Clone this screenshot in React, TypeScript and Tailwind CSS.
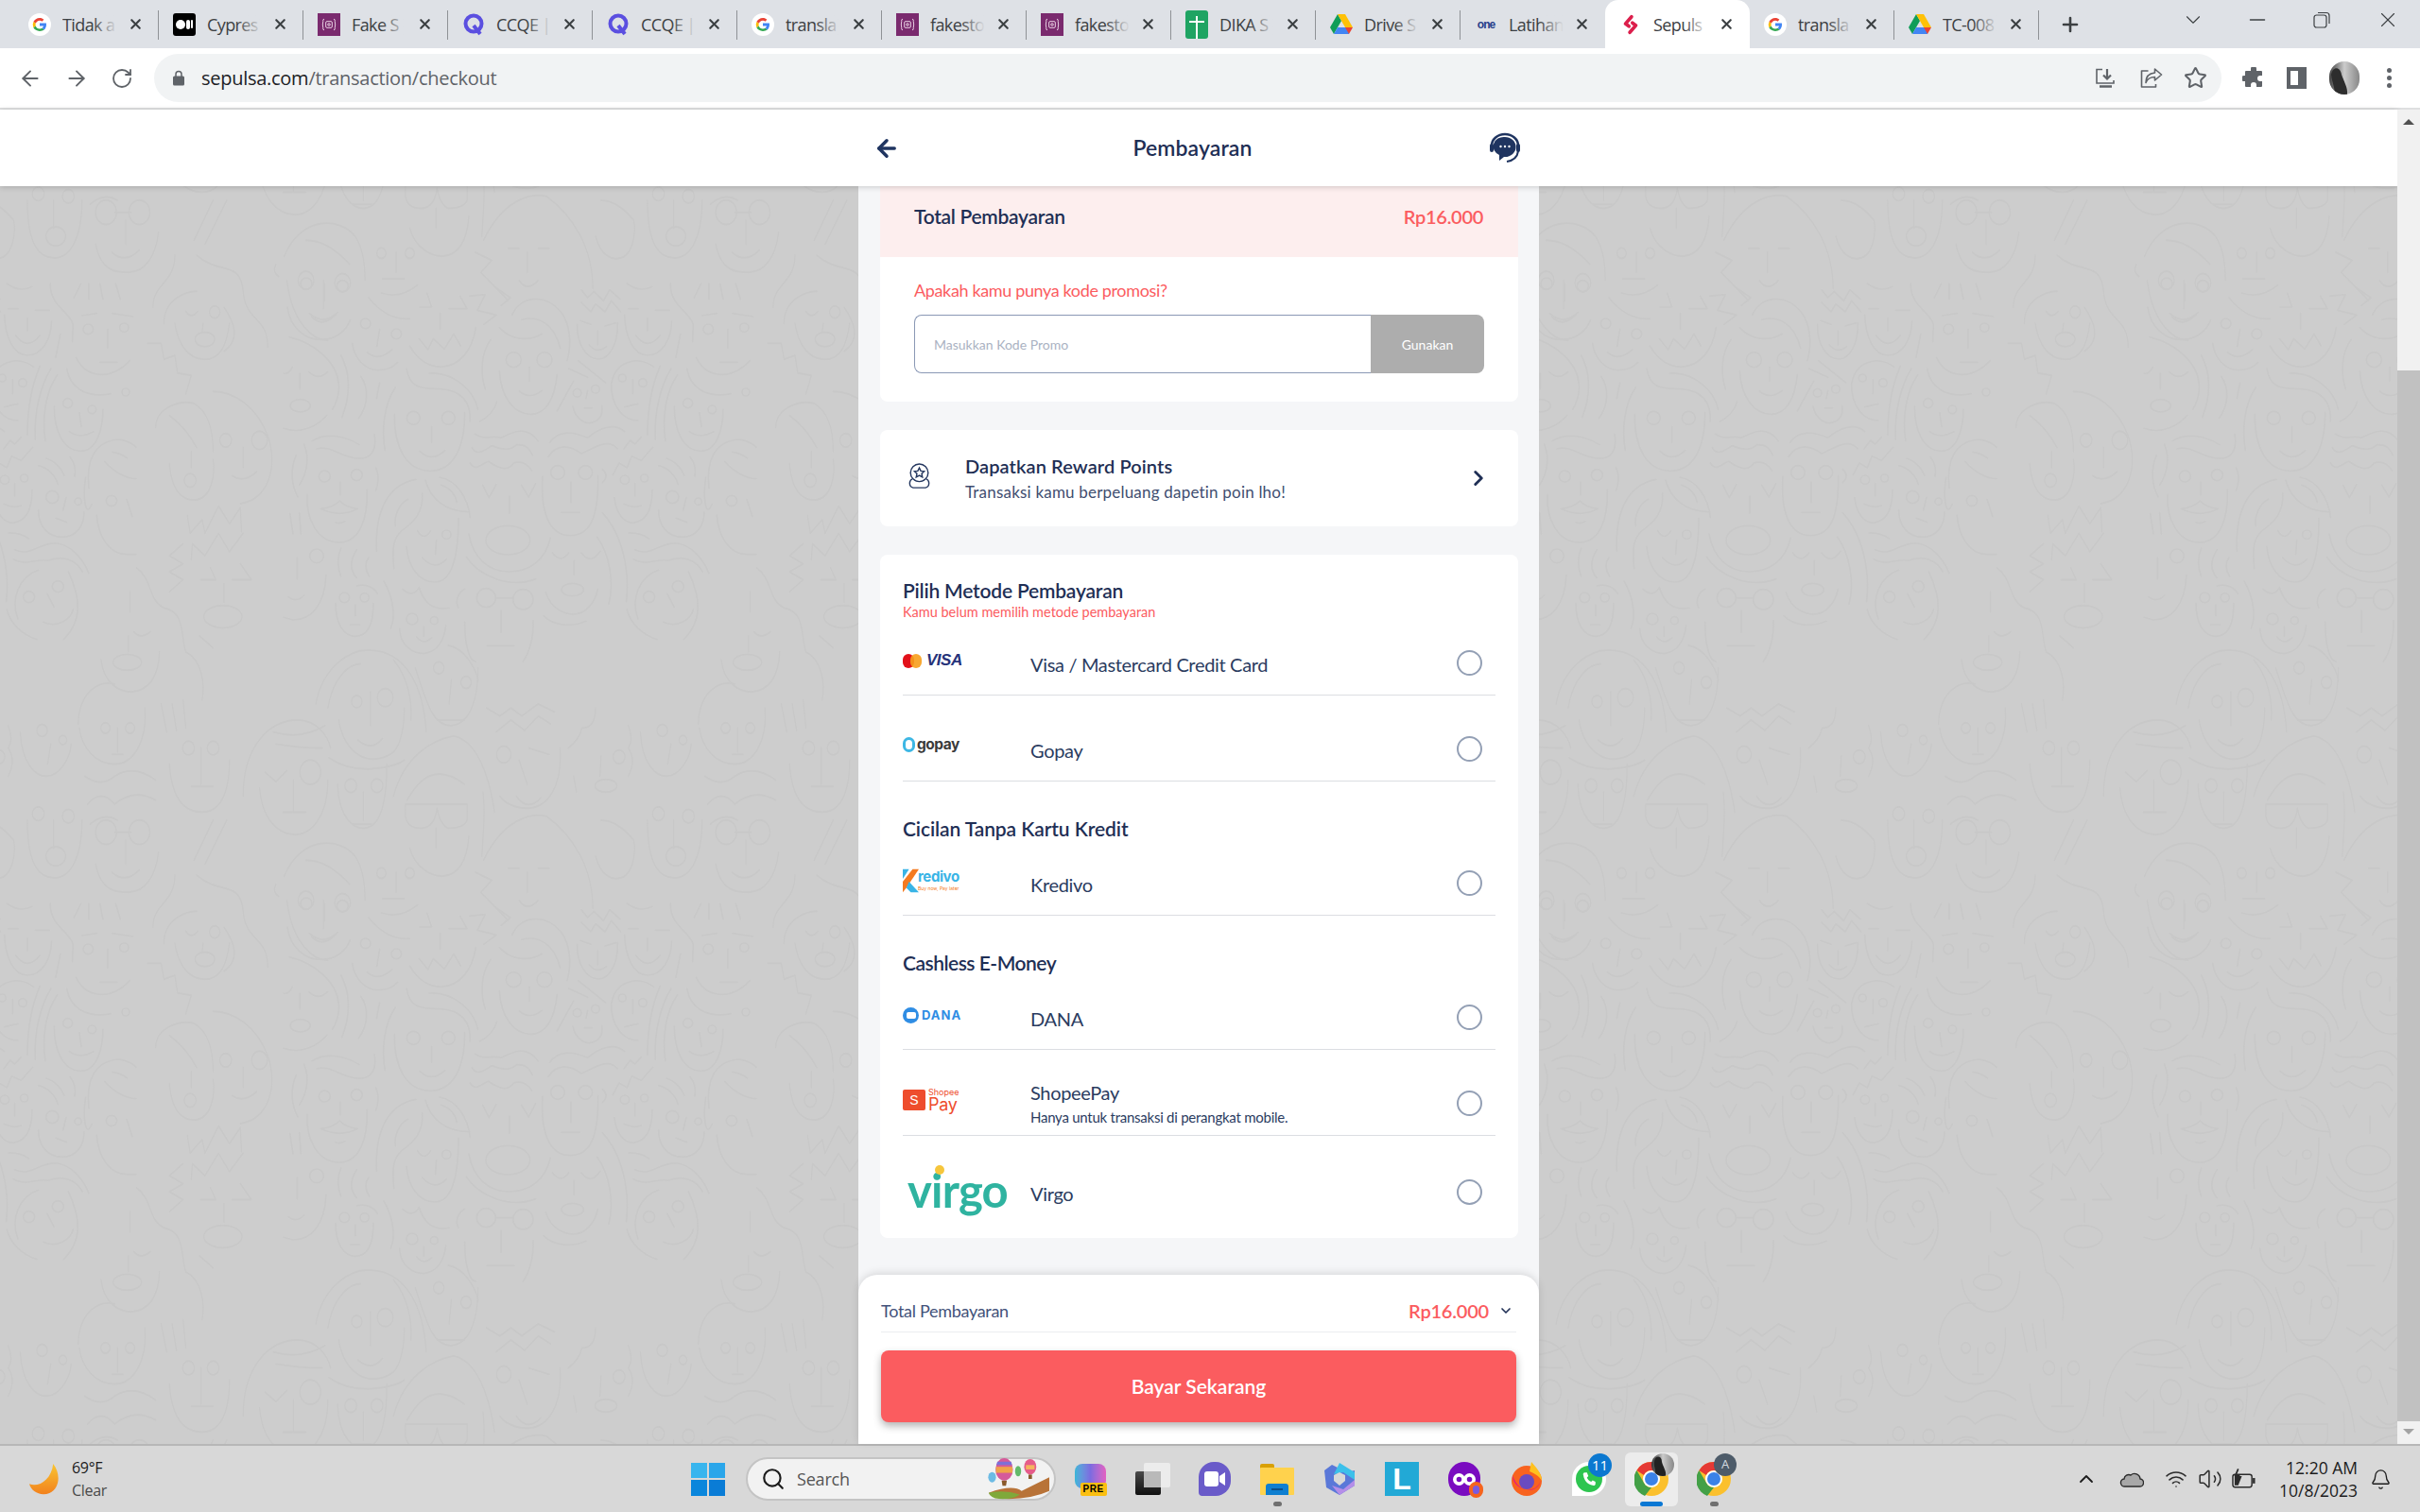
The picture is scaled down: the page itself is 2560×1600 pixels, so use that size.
import React from "react";
import { ArrowLeft, ArrowRight, RotateCw, Star, X, Plus, ChevronDown, ChevronRight, ChevronUp, Minus, Search, Bell, Volume2, Wifi } from "lucide-react";

const A_PATHS = [
  "M12 75 C20 140 70 180 120 178 C165 178 200 150 212 115","M82 95 Q125 135 172 92","M130 0 V55",
  "M218 190 C225 240 260 275 300 275 C330 275 350 265 362 250","M305 145 L296 200","M265 218 Q300 250 345 210","M270 45 C310 95 350 115 400 112","M310 30 Q370 50 425 5",
  "M400 198 C430 250 470 265 500 265 C560 262 600 210 610 140","M430 175 L458 210 L475 175 L510 208 L540 160 L562 198","M497 95 V145","M432 75 H470 L455 30","M525 80 H582 L560 40","M590 40 L640 35 L615 85 L675 100 L635 130","M670 10 L720 45 L690 70",
  "M780 265 V310","M748 342 Q782 370 820 340","M685 278 C690 360 730 415 785 415 C830 415 860 370 868 290","M725 100 C750 40 830 30 880 90 C910 130 915 190 900 245","M685 140 C720 180 780 185 820 160","M755 115 C810 100 860 130 878 205","M658 178 C625 220 625 290 640 335",
  "M18 170 C100 190 170 250 175 320 C178 350 165 385 155 400","M0 460 C60 480 110 450 138 418","M80 280 Q110 310 140 280","M0 285 Q15 290 28 265","M52 285 V335","M182 228 C210 280 215 350 185 425","M245 295 C270 330 270 385 238 428","M305 315 L295 365",
  "M470 455 V505","M432 532 Q470 570 512 530","M352 415 C350 520 390 595 465 595 C540 595 575 520 575 410","M390 270 C400 330 430 335 500 335 C560 340 595 370 592 438","M462 285 C540 280 605 340 617 400","M355 330 C320 380 310 460 322 530","M622 438 C650 425 670 400 677 375",
  "M607 478 C640 500 660 480 690 490 C730 470 770 450 808 500","M598 520 C610 550 640 530 660 515 C700 530 720 530 740 512 C770 510 780 525 790 545","M592 570 C610 600 630 570 650 565 C680 585 710 600 730 570 C760 560 780 580 788 595","M632 640 L652 680 L675 638","M755 640 L778 678 L800 635","M717 675 V730","M588 795 C600 870 650 915 715 915 C780 915 830 880 847 808","M580 868 C620 930 720 970 800 938",
  "M845 505 C870 465 920 470 965 490 C1000 460 1050 440 1082 470","M840 550 C870 505 910 515 945 540 C990 520 1030 490 1060 525","M912 630 V695","M882 727 H940","M822 612 C815 720 840 800 910 800 C970 800 1000 750 998 610","M1012 590 Q1035 610 1012 632",
  "M1080 525 L1100 498 L1115 510 L1135 488","M1045 608 L1065 570 L1090 585 L1105 548 L1135 562 L1172 520","M1115 635 V675","M1080 700 Q1110 715 1135 705","M1050 680 C1055 730 1080 760 1110 760 C1150 755 1170 720 1170 655",
  "M1190 578 C1220 585 1245 610 1252 638","M1215 555 C1245 565 1265 590 1272 610","M1290 550 C1305 570 1310 590 1305 612","M1278 680 L1268 720","M1245 745 L1280 758","M1190 720 C1190 770 1220 805 1265 805 C1310 805 1335 770 1335 725",
  "M932 130 C930 190 960 240 1000 240 C1035 240 1062 190 1060 125","M942 118 L975 130","M1020 135 L1055 125","M997 150 V195","M970 195 Q995 225 1025 200","M945 20 L965 45 L985 25 L1015 55 L1035 20 L1068 50","M945 60 L975 90 L990 65 L1020 90 L1040 55 L1070 90",
  "M1082 100 C1085 170 1110 228 1155 228 C1200 228 1230 180 1232 120","M1095 80 H1125","M1180 85 H1225","M1155 110 V150","M1118 165 Q1155 215 1195 165","M1090 0 Q1130 30 1170 10",
  "M1108 305 V350","M1082 392 L1125 382","M1175 265 C1120 225 1050 250 1040 320 C1040 380 1070 435 1125 435","M1195 262 C1170 320 1155 400 1155 480","M1230 270 C1200 320 1175 400 1180 495","M1250 290 C1215 340 1200 420 1212 500","M905 270 L965 298","M935 245 L1022 315","M920 310 L868 405","M965 340 L960 365","M955 395 H980","M918 390 C925 425 950 443 970 443 C1000 440 1015 420 1010 388",
  "M1320 410 L1326 455","M1288 470 Q1320 495 1365 470","M1240 390 C1240 470 1270 532 1325 532 C1375 532 1395 460 1395 400","M1280 270 C1290 330 1340 365 1420 350","M1310 235 C1340 300 1420 310 1480 245","M1410 145 V205","M1385 250 H1440","M1328 102 L1375 95","M1425 95 L1490 105","M1228 0 C1225 70 1290 90 1300 130 L1298 185","M1260 160 L1245 235","M1303 45 L1325 0","M1350 50 V0","M1395 50 L1385 0","M1450 50 L1435 0",
  "M90 500 C130 475 190 480 240 512","M105 525 C150 510 190 560 250 555 C285 550 295 520 288 478","M180 630 V672","M118 715 Q160 710 178 690 Q195 710 235 715 Q180 745 118 715","M165 758 Q180 765 195 755","M75 670 C70 750 110 822 175 822 C240 822 268 750 265 655","M65 510 C85 560 70 610 50 640","M40 545 C20 590 25 640 45 678","M292 585 C305 610 300 640 292 658",
  "M295 850 C290 740 320 640 420 622","M450 625 C465 680 510 725 590 725","M495 615 C550 625 585 680 592 742","M500 640 C530 650 545 670 550 695","M395 685 C365 700 350 740 355 770","M440 665 C445 730 410 760 375 785 C345 810 345 850 350 905","M425 785 Q445 820 467 785","M485 815 L482 860","M440 870 Q480 915 517 875","M390 835 C395 900 430 948 480 948 C525 948 555 890 555 745",
  "M853 855 Q880 890 905 855","M945 855 Q975 895 1005 850","M922 880 V925","M832 980 C850 1040 900 1050 920 1050 C960 1050 990 1010 997 970","M995 805 C1035 860 1050 950 1032 1018","M1012 728 C1070 790 1100 900 1088 1010","M825 1055 C860 1090 920 1090 960 1072",
  "M673 998 H728","M690 1038 V1108","M645 1150 H732","M575 1075 C575 1150 590 1200 610 1200","M792 1070 C795 1130 775 1180 760 1200","M575 970 C550 985 545 1010 555 1030",
  "M1115 845 C1170 870 1190 820 1250 825 C1290 830 1330 870 1350 920","M1110 875 C1150 900 1190 870 1220 880 C1270 860 1310 880 1330 915","M1095 792 Q1130 790 1160 810","M1218 985 L1240 1028","M1205 1075 C1250 1095 1295 1065 1300 1035","M1190 910 C1130 930 1100 1000 1125 1065","M1285 915 C1325 1000 1330 1070 1270 1130","M1090 1035 C1100 1080 1140 1115 1185 1130",
  "M228 1020 V1055","M212 1083 H242","M165 1015 C165 1080 190 1120 228 1120 C270 1120 285 1080 285 1015","M232 960 C265 950 290 970 298 985","M182 840 C170 870 170 900 182 930","M232 845 C210 880 210 910 232 935","M270 870 C255 890 260 910 272 930","M318 945 C350 1000 355 1060 340 1095",
  "M445 1090 V1120","M422 1122 Q445 1150 470 1125","M368 1095 C370 1150 410 1175 445 1175 C490 1170 510 1130 515 1085","M378 970 Q410 1000 430 965 C445 1010 470 1040 525 1030",
  "M43 870 V938","M15 995 Q40 1015 65 990","M135 925 C130 1020 90 1068 30 1068 L0 1060","M20 730 L30 795","M50 728 L55 795",
  "M1340 615 C1330 680 1340 750 1360 700","M1350 650 C1340 560 1370 500 1445 495 C1480 498 1500 520 1500 520","M1400 565 C1430 600 1470 620 1500 620","M1425 535 Q1455 540 1472 555","M1470 685 L1488 740","M1375 735 C1380 810 1420 860 1470 860 L1500 860",
];
const A_CIRCLES = [[72,0,18],[187,8,18],[260,127,16],[358,160,16],[730,242,24],[828,242,24],[412,427,21],[523,427,21],[870,600,22],[958,600,22],[1083,623,14],[1145,618,12],[1234,678,20],[1316,692,11],[1075,300,12],[1140,315,13],[932,347,13],[990,335,13],[1283,380,15],[1360,400,13],[1348,145,16],[1462,140,14],[130,612,18],[232,608,18],[517,797,14],[643,998,30],[760,1003,32],[1160,995,18],[1252,962,18],[193,997,16],[257,997,14],[408,1065,18],[478,1070,12],[105,865,22],[1422,690,17],[1467,345,12]];
const A_ELLIPSES = [[53,388,32,20],[712,815,70,46],[917,972,35,20]];

const B_PATHS = [
  "M578 645 C590 600 640 575 680 578 C740 580 775 620 780 680","M600 650 C610 610 640 595 660 595","M720 590 C745 610 755 640 752 665","M678 630 V672","M655 690 Q680 705 700 688","M620 665 C630 710 680 725 720 705 C735 695 740 670 740 650",
  "M826 615 L822 645","M800 665 H850","M760 600 C780 640 790 672 825 672 C860 670 875 640 875 600","M820 572 C850 575 870 600 875 615",
  "M445 760 C445 700 490 665 545 665 C580 665 600 685 605 700","M500 680 Q550 690 595 672","M505 695 Q550 700 590 700","M485 730 L505 742 L525 728","M537 740 V780","M518 780 H560","M475 750 C480 790 510 808 540 808 C570 808 600 785 600 740",
  "M665 755 V790","M645 795 H680","M618 745 C620 790 650 800 665 800 C695 800 708 770 708 720","M602 712 C650 735 720 725 740 715",
  "M720 760 C740 710 790 690 830 685 C870 690 895 730 905 780","M745 765 C770 735 800 720 850 745","M742 770 H855 V790 Q850 800 820 800 Q805 795 800 775 Q795 800 770 800 Q745 800 742 785 Z","M798 800 V825","M750 825 C760 850 790 860 810 860 C840 858 855 840 858 810","M882 835 C885 800 888 780 884 755",
  "M968 700 L1005 708","M950 715 L965 745","M945 760 Q965 780 990 762","M1025 700 C1030 750 1000 775 965 775 C945 775 925 770 915 760","M890 650 L915 660 L935 650 L955 660 L985 645 L1015 655","M908 680 L935 665 L960 678 L985 660 L1008 670",
  "M1040 700 Q1060 690 1065 675 Q1090 675 1090 650","M1150 672 Q1160 690 1150 700 Q1165 715 1150 735","M1100 710 L1098 735","M1050 735 L1055 755",
  "M1228 695 L1222 720","M1172 680 C1175 720 1200 735 1220 735 C1245 735 1265 710 1265 695",
  "M1278 670 C1280 630 1315 615 1345 620","M1400 650 C1405 690 1380 720 1345 720 C1310 720 1285 700 1280 675","M1350 675 V705","M1340 708 H1360",
  "M1430 645 L1440 680","M1450 645 L1458 678","M1470 640 L1475 675","M1503 700 V745","M1485 748 H1525","M1445 720 C1450 770 1480 780 1505 780 C1535 780 1555 760 1555 715",
  "M1290 735 Q1320 750 1345 735 Q1380 720 1420 740","M1295 770 Q1320 750 1345 770 Q1380 750 1420 765","M1300 795 Q1325 780 1350 790",
  "M1233 790 V825","M1185 790 C1185 850 1210 862 1235 862 C1265 862 1285 835 1285 790",
  "M1345 805 H1375","M1365 815 V845","M1340 855 Q1365 870 1390 852","M1310 845 C1320 880 1350 880 1370 880 C1400 880 1420 860 1425 830",
  "M1090 835 C1100 860 1120 865 1135 862 C1155 860 1165 835 1160 815","M1100 790 Q1130 790 1160 815",
  "M505 870 Q498 880 510 885","M592 890 V925","M570 935 Q590 950 615 932","M525 890 C535 945 575 965 600 965","M520 860 C550 810 620 810 650 835 C665 850 668 870 668 890","M560 840 Q600 840 640 870",
  "M725 855 V880","M700 888 H740",
  "M885 840 C920 790 970 780 1000 785 C1050 810 1085 850 1085 900","M930 850 H950","M985 850 H1005","M965 855 V880","M950 890 Q965 905 985 890","M870 855 L900 865 L880 880 L930 915",
  "M1490 840 L1525 790","M1510 845 L1550 790",
  "M300 170 C300 140 340 130 360 130","M410 150 C430 170 440 190 410 205","M340 155 Q350 165 362 155","M372 170 L370 180","M320 170 C330 210 360 215 375 215 C405 215 415 195 420 170","M360 85 C400 110 440 90 445 130 C450 170 490 160 490 200","M280 150 C280 120 320 120 320 85",
  "M270 195 H295 L300 215 L320 210 L325 232 L350 235 L340 258",
  "M285 300 C285 275 330 265 355 270 C380 280 390 300 390 330","M310 285 Q340 300 360 325","M350 330 V350","M310 345 C315 385 340 392 360 390 C385 388 395 360 390 340",
  "M445 325 V350","M425 360 Q445 370 470 355","M390 255 C430 255 470 275 490 310 C510 350 490 390 440 395",
  "M343 410 L348 432 L370 415 L375 432 L400 398 L420 420 L440 400 L442 430","M350 465 L352 445 L375 460 L400 432 L420 455 L445 432","M335 445 L310 460 L335 470 L310 480 L335 490 L310 505","M367 490 H395 L385 475","M425 490 H460 L440 470","M410 495 V518","M365 560 L390 575",
  "M250 475 C280 490 270 515 300 525 C340 530 330 560 340 580 C370 590 375 620 370 640","M245 555 Q258 565 275 555","M238 505 V530","M235 560 V580","M185 590 C190 620 220 630 240 630 C275 628 290 610 292 580",
];
const B_CIRCLES = [[653,642,8],[705,637,12],[803,600,8],[853,618,8],[568,730,16],[642,747,9],[690,747,9],[922,708,11],[1133,711,9],[1212,678,8],[1250,690,6],[1328,675,7],[1373,675,7],[1480,700,9],[1525,700,9],[1205,782,9],[1260,785,9],[1329,805,16],[1390,805,16],[560,890,12],[627,893,12],[698,856,7],[750,856,7],[393,156,8],[348,366,9],[413,316,9],[475,316,12]];
const B_ELLIPSES = [[1109,747,20,8],[1237,835,18,12],[375,190,18,9],[408,536,35,14],[233,593,26,10]];

function Doodle() {
  return (
    <svg className="absolute inset-0 w-full h-full" aria-hidden="true">
      <defs>
        <g id="tileart" fill="none" stroke="#c8c8c8" strokeLinecap="round" strokeLinejoin="round">
          <g transform="translate(300 103) scale(0.3333)" strokeWidth="5">
            {A_PATHS.map((d, i) => <path key={i} d={d} />)}
            {A_CIRCLES.map(([x, y, r], i) => <circle key={i} cx={x} cy={y} r={r} />)}
            {A_ELLIPSES.map(([x, y, a, b], i) => <ellipse key={i} cx={x} cy={y} rx={a} ry={b} />)}
          </g>
          <g transform="translate(0 1) scale(0.578 0.848)" strokeWidth="2.3">
            {B_PATHS.map((d, i) => <path key={i} d={d} />)}
            {B_CIRCLES.map(([x, y, r], i) => <ellipse key={i} cx={x} cy={y} rx={r * 1.2} ry={r * 0.95} />)}
            {B_ELLIPSES.map(([x, y, a, b], i) => <ellipse key={i} cx={x} cy={y} rx={a} ry={b} />)}
          </g>
        </g>
        <pattern id="faces" patternUnits="userSpaceOnUse" width="656" height="656">
          <use href="#tileart" />
          <use href="#tileart" x="-656" />
          <use href="#tileart" y="-656" />
          <use href="#tileart" x="-656" y="-656" />
        </pattern>
      </defs>
      <rect width="100%" height="100%" fill="url(#faces)" />
    </svg>
  );
}

const GoogleG = () => (
  <svg viewBox="0 0 48 48" className="w-[24px] h-[24px]">
    <circle cx="24" cy="24" r="24" fill="#fff" />
    <path fill="#EA4335" d="M24 10c3.5 0 6.4 1.2 8.8 3.4l-4 4c-1.3-1.2-3-2-4.8-2-4 0-7.300 2.700-8.500 6.300l-4.700-3.600C13 13.500 18 10 24 10z" />
    <path fill="#FBBC05" d="M15.500 21.700a8.700 8.700 0 0 0 0 5.400l-4.700 3.600a15 15 0 0 1 0-12.600z" />
    <path fill="#34A853" d="M24 38c-5.900 0-11-3.400-13.200-7.300l4.700-3.600c1.200 3.500 4.500 6 8.500 6 2 0 3.800-.5 5.200-1.500l4.500 3.500C31 36.800 27.700 38 24 38z" />
    <path fill="#4285F4" d="M38 24c0-1-.1-2-.3-3H24v5.800h8c-.4 2-1.500 3.500-3 4.600l4.500 3.500C36.300 32.400 38 28.600 38 24z" />
  </svg>
);
const Medium = () => (
  <div className="w-[24px] h-[24px] rounded-[3px] bg-black flex items-center justify-center gap-[1px]">
    <span className="w-[10px] h-[10px] rounded-full bg-white" />
    <span className="w-[4px] h-[10px] rounded-full bg-white" />
    <span className="w-[2px] h-[9px] rounded-full bg-white" />
  </div>
);
const FakeStore = () => (
  <div className="w-[24px] h-[24px] bg-[#7a2a6e] flex items-center justify-center">
    <svg viewBox="0 0 24 24" className="w-[20px] h-[20px]" fill="none" stroke="#e8cfe3" strokeWidth="1.2">
      <path d="M6 5 Q4 5 4.500 8 L4 12 L4.500 16 Q4 19 6 19 M18 5 Q20 5 19.500 8 L20 12 L19.500 16 Q20 19 18 19" />
      <rect x="8" y="8" width="8" height="8" rx="1.500" />
      <circle cx="12" cy="12" r="1.500" />
    </svg>
  </div>
);
const QIcon = () => (
  <svg viewBox="0 0 24 24" className="w-[24px] h-[24px]" fill="none">
    <circle cx="12" cy="11" r="8.500" stroke="#5b4fe0" strokeWidth="4" />
    <path d="M12 13 L19 22" stroke="#5b4fe0" strokeWidth="4" />
  </svg>
);
const Sheets = () => (
  <div className="w-[24px] h-[30px] rounded-[3px] bg-[#1fa463] relative">
    <span className="absolute left-[11px] top-[6px] w-[2px] h-[24px] bg-white" />
    <span className="absolute left-[4px] top-[11px] w-[16px] h-[2px] bg-white" />
  </div>
);
const Drive = () => (
  <svg viewBox="0 0 24 22" className="w-[24px] h-[22px]">
    <path fill="#0F9D58" d="M8 0 L0 14 L4 21 L12 7 Z" />
    <path fill="#FFC107" d="M8 0 H16 L24 14 H16 Z" />
    <path fill="#4285F4" d="M4 21 L8 14 H20 L20 21 Z" />
    <path fill="#EA4335" d="M20 21 H20 L24 14 H16 Z" />
  </svg>
);
const OneIcon = () => (
  <div className="w-[24px] h-[24px] flex items-center justify-center text-[12px] font-bold text-[#27408b] tracking-[-1px] font-['Liberation_Sans']">
    one
  </div>
);
const Sepulsa = () => (
  <svg viewBox="0 0 24 24" className="w-[22px] h-[26px]" fill="none" stroke="#dc1f4c" strokeWidth="4" strokeLinecap="round" strokeLinejoin="round">
    <path d="M13 3 L6 11 L10 14" />
    <path d="M11 21 L18 13 L14 10" />
  </svg>
);

const TABS: { title: string; icon: React.ReactNode; active?: boolean; hideSep?: boolean }[] = [
  { title: "Tidak a", icon: <GoogleG /> },
  { title: "Cypres", icon: <Medium /> },
  { title: "Fake S", icon: <FakeStore /> },
  { title: "CCQE |", icon: <QIcon /> },
  { title: "CCQE |", icon: <QIcon /> },
  { title: "transla", icon: <GoogleG /> },
  { title: "fakesto", icon: <FakeStore /> },
  { title: "fakesto", icon: <FakeStore /> },
  { title: "DIKA S", icon: <Sheets /> },
  { title: "Drive S", icon: <Drive /> },
  { title: "Latihan", icon: <OneIcon />, hideSep: true },
  { title: "Sepuls", icon: <Sepulsa />, active: true, hideSep: true },
  { title: "transla", icon: <GoogleG /> },
  { title: "TC-008", icon: <Drive /> },
];

function TabStrip() {
  return (
    <div className="h-[51px] bg-[#dee1e6] flex items-stretch pl-[15px] shrink-0 font-['Open_Sans']">
      {TABS.map((t, i) => (
        <div key={i} className={t.active ? "relative w-[153px] bg-white rounded-t-[14px] flex items-center" : "relative w-[153px] flex items-center"}>
          <div className="w-[24px] ml-[15px] shrink-0 flex justify-center">{t.icon}</div>
          <div className="relative ml-[12px] w-[58px] overflow-hidden whitespace-nowrap text-[18px] leading-[24px] text-[#3c4043] tracking-[-0.6px]">
            {t.title}
            <span className={t.active ? "absolute right-0 top-0 bottom-0 w-[26px] bg-linear-to-r from-transparent to-white" : "absolute right-0 top-0 bottom-0 w-[26px] bg-linear-to-r from-transparent to-[#dee1e6]"} />
          </div>
          <X className="absolute left-[120px] w-[17px] h-[17px] text-[#3c4043]" strokeWidth={3} />
          {!t.hideSep && <span className="absolute right-0 top-[11px] h-[31px] w-[1px] bg-[#8f9296]" />}
        </div>
      ))}
      <div className="w-[66px] flex items-center justify-center">
        <Plus className="w-[24px] h-[24px] text-[#3c4043]" strokeWidth={2.600} />
      </div>
      <div className="flex-1" />
      <div className="flex items-start pt-[8px] text-[#3c4043]">
        <ChevronDown className="w-[26px] h-[26px] mr-[42px]" strokeWidth={1} />
        <Minus className="w-[26px] h-[26px] mr-[45px]" strokeWidth={1.200} />
        <svg viewBox="0 0 20 20" className="w-[20px] h-[24px] mr-[47px] mt-[1px]" fill="none" stroke="#3c4043" strokeWidth="1.200">
          <rect x="2" y="5" width="13" height="13" rx="2.500" />
          <path d="M6 2.500 H15 Q18 2.500 18 5.500 V14" />
        </svg>
        <X className="w-[26px] h-[26px] mr-[21px]" strokeWidth={1} />
      </div>
    </div>
  );
}

function Toolbar() {
  return (
    <div className="h-[65px] bg-white border-b-[2px] border-[#dedfe0] flex items-start shrink-0 pt-[6px] box-border">
      <div className="w-[163px] h-[51px] flex items-center text-[#5f6368] pl-[19px] shrink-0">
        <ArrowLeft className="w-[26px] h-[26px]" strokeWidth={1.800} />
        <ArrowRight className="w-[26px] h-[26px] ml-[23px]" strokeWidth={1.800} />
        <RotateCw className="w-[24px] h-[24px] ml-[23px]" strokeWidth={1.800} />
      </div>
      <div className="w-[2187px] h-[51px] bg-[#f1f3f4] rounded-full flex items-center shrink-0 pl-[20px] pr-[15px]">
        <svg viewBox="0 0 12 16" className="w-[12px] h-[17px] shrink-0" fill="#5f6368">
          <rect x="0" y="6" width="12" height="10" rx="1.500" />
          <path d="M3 7 V4 a3 3 0 0 1 6 0 V7" fill="none" stroke="#5f6368" strokeWidth="1.500" />
        </svg>
        <span className="ml-[18px] text-[20px] tracking-[-0.27px] text-[#202124] font-['Open_Sans'] whitespace-nowrap">
          sepulsa.com<span className="text-[#5f6368]">/transaction/checkout</span>
        </span>
        <div className="flex-1" />
        <svg viewBox="0 0 24 24" className="w-[24px] h-[24px] text-[#5f6368]" fill="none" stroke="currentColor" strokeWidth="1.600">
          <path d="M9 2.500 H3 V17 H21 V14" />
          <path d="M14 2 V12 M10 8.500 L14 12.500 L18 8.500" strokeWidth="2.200" />
          <path d="M6 20.500 H19" strokeWidth="2.500" />
        </svg>
        <svg viewBox="0 0 24 24" className="w-[25px] h-[24px] ml-[24px] text-[#5f6368]" fill="none" stroke="currentColor" strokeWidth="1.600" strokeLinejoin="round">
          <path d="M9 4 H2 V21 H17 V18" />
          <path d="M16 2 L23 8 L16 14 V10.500 C11 10.500 8 12.500 6.500 16.500 C6.500 10.500 10 6.500 16 6 Z" />
        </svg>
        <Star className="w-[25px] h-[25px] ml-[22px] text-[#5f6368]" strokeWidth={2} />
      </div>
      <div className="h-[51px] flex items-center shrink-0 pl-[22px]">
        <svg viewBox="0 0 24 24" className="w-[24px] h-[24px]" fill="#5f6368">
          <path d="M9 2 a3 3 0 0 1 6 0 v2 h5 a1 1 0 0 1 1 1 v4 h-2 a3 3 0 0 0 0 6 h2 v5 a1 1 0 0 1-1 1 h-5 v-2 a3 3 0 0 0-6 0 v2 H4 a1 1 0 0 1-1-1 v-5 h-1 a3 3 0 0 1 0-6 h1 V5 a1 1 0 0 1 1-1 h5 z" />
        </svg>
        <div className="w-[21px] h-[23px] ml-[23px] border-[4px] border-r-[9px] border-[#5f6368] bg-white box-border" />
        <div className="relative w-[32px] h-[35px] ml-[24px] rounded-full overflow-hidden bg-linear-to-r from-[#444] via-[#ccc] to-[#888]">
          <svg viewBox="0 0 32 35" className="absolute inset-0 w-full h-full" fill="#2d2d2d">
            <path d="M2 14 C4 4 12 6 13 14 C15 20 20 28 19 35 H6 C6 28 3 22 2 14 Z" />
          </svg>
        </div>
        <div className="ml-[29px] flex flex-col gap-[3px]">
          <span className="w-[5px] h-[5px] rounded-full bg-[#5f6368]" />
          <span className="w-[5px] h-[5px] rounded-full bg-[#5f6368]" />
          <span className="w-[5px] h-[5px] rounded-full bg-[#5f6368]" />
        </div>
      </div>
    </div>
  );
}

const VisaLogo = () => (
  <div className="flex items-center h-[20px]">
    <span className="w-[12px] h-[15px] rounded-full bg-[#e2111a]" />
    <span className="w-[12px] h-[15px] rounded-full bg-[#f79e1b] -ml-[4px] opacity-90" />
    <span className="ml-[5px] text-[17px] leading-[20px] italic font-bold text-[#26337a] font-['Liberation_Sans'] tracking-[-0.5px]">VISA</span>
  </div>
);
const GopayLogo = () => (
  <div className="flex items-center h-[20px]">
    <span className="w-[13px] h-[16px] rounded-full border-[3px] border-[#3db7e4] box-border" />
    <span className="ml-[2px] text-[15.500px] leading-[20px] font-bold text-[#3a3a3a] font-['Inter'] tracking-[-0.5px]">gopay</span>
  </div>
);
const KredivoLogo = () => (
  <div className="relative flex items-start h-[26px] w-[60px]">
    <svg viewBox="0 0 18 26" className="w-[17px] h-[26px] shrink-0">
      <path d="M0 0 H7 L0 11 Z" fill="#38b4e6" />
      <path d="M18 0 H11 L0 14 V26 L4 21 Z" fill="#f47a20" />
      <path d="M7 14 L18 26 H9 L4 21 Z" fill="#38b4e6" />
    </svg>
    <div className="-ml-[1px] flex flex-col">
      <span className="text-[15px] leading-[18px] font-bold text-[#38b4e6] font-['Inter'] tracking-[-0.4px]">redivo</span>
      <span className="text-[5px] leading-[6px] text-[#f47a20] whitespace-nowrap font-['Inter']">Buy now, Pay later</span>
    </div>
  </div>
);
const DanaLogo = () => (
  <div className="flex items-center h-[20px]">
    <span className="relative w-[17px] h-[17px] rounded-full bg-[#2f8de4] flex items-center justify-center">
      <span className="w-[10px] h-[7px] rounded-[2px] bg-white" />
    </span>
    <span className="ml-[3px] text-[13px] leading-[20px] font-bold text-[#2f8de4] font-['Inter'] tracking-[1px]">DANA</span>
  </div>
);
const ShopeeLogo = () => (
  <div className="flex items-center h-[26px]">
    <span className="w-[24px] h-[22px] rounded-[2px] bg-[#ee4d2d] flex items-center justify-center text-white text-[14px] leading-none font-['Liberation_Sans']">S</span>
    <div className="ml-[3px] flex flex-col items-start text-[#ee4d2d] font-['Inter']">
      <span className="text-[9px] leading-[9px] whitespace-nowrap">Shopee</span>
      <span className="text-[18px] leading-[17px] whitespace-nowrap tracking-[-0.3px]">Pay</span>
    </div>
  </div>
);
const VirgoLogo = () => (
  <div className="relative ml-[5px] h-[52px] w-[105px] flex items-end">
    <span className="absolute left-[29px] top-0 w-[10px] h-[10px] rounded-full bg-[#f6c63c]" />
    <span className="text-[49px] leading-[52px] font-bold text-[#2fb3a0] font-['Lato'] tracking-[-0.8px] -mt-[8px]">virgo</span>
  </div>
);

const Radio = ({ extra }: { extra?: string }) => (
  <span className={"ml-auto mr-[14px] w-[27px] h-[27px] rounded-full border-[2px] border-[#94a0b5] box-border shrink-0 " + (extra ?? "")} />
);

function Row(props: { logo: React.ReactNode; label: string; sub?: string; h: string; pb: string; logoExtra: string; radioExtra?: string; noBorder?: boolean }) {
  const { logo, label, sub, h, pb, logoExtra, radioExtra, noBorder } = props;
  return (
    <div className={"flex items-end box-border " + h + " " + pb + (noBorder ? "" : " border-b border-[#dcdee2]")}>
      <div className={"w-[135px] shrink-0 " + logoExtra}>{logo}</div>
      <div className="flex flex-col">
        <span className="text-[20px] leading-[24px] text-[#2b3c5f] tracking-[-0.33px]">{label}</span>
        {sub && <span className="text-[15px] leading-[18px] mt-[5px] text-[#2b3c5f] tracking-[-0.25px]">{sub}</span>}
      </div>
      <Radio extra={radioExtra} />
    </div>
  );
}

function Checkout() {
  return (
    <div className="relative w-[720px] mx-auto bg-[#f5f6f8] flex flex-col h-full">
      <div className="ml-[23px] mr-[22px] bg-white rounded-b-[8px] h-[228px] shrink-0 flex flex-col">
        <div className="h-[75px] bg-[#fdeeee] flex items-center justify-between pl-[36px] pr-[37px] pb-[12px]">
          <span className="text-[21px] font-semibold text-[#1f2f55] tracking-[-0.3px]">Total Pembayaran</span>
          <span className="text-[20px] font-semibold text-[#fb5c5f] tracking-[-0.3px]">Rp16.000</span>
        </div>
        <div className="pl-[36px] pr-[36px] pt-[23px]">
          <div className="text-[18px] leading-[24px] text-[#fb5c5f] tracking-[-0.36px]">Apakah kamu punya kode promosi?</div>
          <div className="flex mt-[14px] h-[62px]">
            <div className="flex-1 border border-[#8a98b5] border-r-0 rounded-l-[8px] flex items-center pl-[20px] text-[14px] text-[#aab2c2]">Masukkan Kode Promo</div>
            <div className="w-[120px] bg-[#adadad] rounded-r-[8px] flex items-center justify-center text-[14px] text-white">Gunakan</div>
          </div>
        </div>
      </div>

      <div className="ml-[23px] mr-[22px] mt-[30px] bg-white rounded-[8px] h-[102px] shrink-0 flex items-center pl-[29px] pr-[29px]">
        <svg viewBox="0 0 26 30" className="w-[25px] h-[28px] shrink-0 -mt-[4px]" fill="none" stroke="#24375f" strokeWidth="1.500">
          <circle cx="13" cy="11" r="10" />
          <path d="M13 5.500 L14.700 9 L18.500 9.500 L15.700 12 L16.500 16 L13 14 L9.500 16 L10.300 12 L7.500 9.500 L11.300 9 Z" />
          <path d="M5 18 C1 20 1 27 6 28 H20 C25 27 25 20 21 18" />
        </svg>
        <div className="ml-[36px] flex flex-col">
          <span className="text-[20px] leading-[26px] font-semibold text-[#1f2f55] tracking-[0.1px]">Dapatkan Reward Points</span>
          <span className="text-[17px] leading-[24px] mt-[3px] text-[#3f4e70] tracking-[0.2px]">Transaksi kamu berpeluang dapetin poin lho!</span>
        </div>
        <ChevronRight className="ml-auto w-[26px] h-[26px] text-[#1f2f55]" strokeWidth={2.600} />
      </div>

      <div className="ml-[23px] mr-[22px] mt-[30px] bg-white rounded-[8px] shrink-0 pl-[24px] pr-[24px] pt-[26px] h-[723px] box-border flex flex-col">
        <div className="text-[21px] leading-[24px] font-semibold text-[#1f2f55] tracking-[-0.2px]">Pilih Metode Pembayaran</div>
        <div className="text-[14.500px] leading-[18px] mt-[2px] text-[#fb5c5f]">Kamu belum memilih metode pembayaran</div>
        <Row logo={<VisaLogo />} label="Visa / Mastercard Credit Card" h="h-[79px]" pb="pb-[20px]" logoExtra="mb-[6px]" />
        <Row logo={<GopayLogo />} label="Gopay" h="h-[91px]" pb="pb-[20px]" logoExtra="mb-[8px]" />
        <div className="mt-[38px] text-[21px] leading-[24px] font-semibold text-[#1f2f55] tracking-[-0.1px]">Cicilan Tanpa Kartu Kredit</div>
        <Row logo={<KredivoLogo />} label="Kredivo" h="h-[80px]" pb="pb-[20px]" logoExtra="mb-[3px]" />
        <div className="mt-[38px] text-[21px] leading-[24px] font-semibold text-[#1f2f55] tracking-[-0.5px]">Cashless E-Money</div>
        <Row logo={<DanaLogo />} label="DANA" h="h-[80px]" pb="pb-[20px]" logoExtra="mb-[6px]" />
        <Row logo={<ShopeeLogo />} label="ShopeePay" sub="Hanya untuk transaksi di perangkat mobile." h="h-[91px]" pb="pb-[10px]" logoExtra="mb-[14px]" radioExtra="mb-[10px]" />
        <Row logo={<VirgoLogo />} label="Virgo" h="h-[108px]" pb="pb-[35px]" logoExtra="-mb-[10px]" noBorder />
      </div>

      <div className="mt-auto h-[179px] bg-white rounded-t-[20px] shadow-[0_-2px_8px_rgba(0,0,0,0.12)] px-[24px] pt-[26px] box-border">
        <div className="flex items-center justify-between h-[24px]">
          <span className="text-[18px] leading-[24px] text-[#43527a] tracking-[-0.3px]">Total Pembayaran</span>
          <div className="flex items-center">
            <span className="text-[20px] leading-[24px] font-semibold text-[#fb5c5f] tracking-[-0.2px]">Rp16.000</span>
            <ChevronDown className="w-[16px] h-[16px] ml-[10px] mr-[3px] text-[#1f2f55]" strokeWidth={2.500} />
          </div>
        </div>
        <div className="mt-[10px] h-[1px] bg-[#eceef0]" />
        <button className="mt-[19px] w-full h-[76px] rounded-[8px] bg-[#fb5c5f] text-white text-[21px] font-semibold shadow-[0_4px_8px_rgba(0,0,0,0.3)]">Bayar Sekarang</button>
      </div>
    </div>
  );
}

function Header() {
  return (
    <div className="relative z-10 h-[81px] shrink-0 bg-white shadow-[0_1px_6px_rgba(0,0,0,0.18)]">
      <div className="w-[720px] mx-auto h-full flex items-center pl-[16px] pr-[19px]">
        <ArrowLeft className="w-[28px] h-[28px] text-[#1f3460]" strokeWidth={3} />
        <div className="flex-1 text-center text-[23px] font-semibold text-[#1f2f55] pr-[4px] tracking-[0.1px]">Pembayaran</div>
        <svg viewBox="0 0 34 34" className="w-[34px] h-[36px]" fill="none">
          <path d="M3 19 V14 a14 12 0 0 1 28 0 V19" stroke="#1f3460" strokeWidth="2.500" />
          <rect x="1" y="12" width="4" height="9" rx="2" fill="#1f3460" />
          <rect x="29" y="12" width="4" height="9" rx="2" fill="#1f3460" />
          <path d="M17 5 a11 10 0 0 1 0 21 h-1 l-5 4 v-6 a11 10 0 0 1 6 -19 z" fill="#1f3460" />
          <circle cx="12.500" cy="15" r="1.200" fill="#fff" /><circle cx="17" cy="15" r="1.200" fill="#fff" /><circle cx="21.500" cy="15" r="1.200" fill="#fff" />
          <path d="M31 20 C30 27 25 30 19 31" stroke="#1f3460" strokeWidth="2" />
        </svg>
      </div>
    </div>
  );
}

function Scrollbar() {
  return (
    <div className="w-[24px] shrink-0 bg-[#f1f1f1] flex flex-col items-center relative z-20">
      <div className="mt-[10px] w-0 h-0 border-x-[6px] border-x-transparent border-b-[6px] border-b-[#505050]" />
      <div className="mt-[260px] w-full h-[1112px] bg-[#c1c1c1]" />
      <div className="mt-[8px] w-0 h-0 border-x-[6px] border-x-transparent border-t-[6px] border-t-[#a3a3a3]" />
    </div>
  );
}

const Balloons = () => (
  <svg viewBox="0 0 72 48" className="w-[72px] h-[44px]">
    <path d="M2 40 Q30 30 40 38 L72 22 L72 38 Q50 48 20 47 Q8 46 2 40Z" fill="#b87338" />
    <path d="M2 40 Q20 36 38 42 Q30 48 14 47 Q4 46 2 40Z" fill="#7fa93a" />
    <ellipse cx="20" cy="13" rx="10" ry="13" fill="#d55a9a" />
    <path d="M10.500 10 H29.500 V17 H10.500 Z" fill="#f0a34a" />
    <path d="M12 4 H28 L29 8 H11 Z" fill="#7d70d8" />
    <path d="M17 26 H23 L22 32 H18 Z" fill="#8a5a2b" />
    <ellipse cx="6" cy="22" rx="4.500" ry="6" fill="#6dbbe4" />
    <ellipse cx="36" cy="15" rx="3.500" ry="6" fill="#63b96a" />
    <ellipse cx="50" cy="10" rx="7" ry="9" fill="#e65c8a" />
    <path d="M45 8 H55 V13 H45 Z" fill="#f4b55d" />
    <path d="M48 19 H52 V24 H48 Z" fill="#8a5a2b" />
  </svg>
);

const ChromeLogo = () => (
  <svg viewBox="0 0 36 36" className="w-[36px] h-[36px]">
    <circle cx="18" cy="18" r="18" fill="#fbc02d" />
    <path d="M18 0 A18 18 0 0 1 33.600 9 H18 A9 9 0 0 0 10 14 L2.400 9 A18 18 0 0 1 18 0Z" fill="#e53935" />
    <path d="M2.400 9 L10 22 A9 9 0 0 0 18 27 L11 36 A18 18 0 0 1 2.400 9Z" fill="#43a047" />
    <circle cx="18" cy="18" r="9" fill="#fff" />
    <circle cx="18" cy="18" r="7" fill="#3b82e8" />
  </svg>
);

const DOCK: React.ReactNode[] = [
  <div className="relative w-[33px] h-[32px]">
    <div className="w-[33px] h-[26px] rounded-[8px] bg-linear-to-r from-[#38b6d8] via-[#7c6be0] to-[#e35fc1]" />
    <span className="absolute -bottom-[2px] left-[6px] px-[3px] rounded-[2px] bg-[#fbbf11] text-[10px] leading-[14px] font-bold text-black font-['Liberation_Sans'] tracking-[0.5px]">PRE</span>
  </div>,
  <div className="relative w-[37px] h-[34px]">
    <div className="absolute left-[9px] top-0 w-[28px] h-[26px] rounded-[2px] bg-[#ececec]" />
    <div className="absolute left-0 top-[9px] w-[27px] h-[25px] rounded-[2px] bg-linear-to-b from-[#4a4a4a] to-[#111]" />
    <div className="absolute left-[9px] top-[9px] w-[18px] h-[17px] bg-[#b9b9b9]" />
  </div>,
  <div className="relative w-[34px] h-[36px] rounded-[16px] rounded-bl-[4px] bg-[#6a5bc9] flex items-center justify-center">
    <svg viewBox="0 0 22 16" className="w-[22px] h-[16px]" fill="#fff"><rect x="0" y="0" width="15" height="16" rx="3" /><path d="M16 5 L22 1 V15 L16 11 Z" /></svg>
  </div>,
  <div className="relative w-[36px] h-[33px]">
    <div className="absolute left-0 top-0 w-[15px] h-[8px] rounded-t-[2px] bg-[#d9a005]" />
    <div className="absolute left-0 top-[4px] right-0 bottom-0 bg-[#ffd24d] rounded-[1px]" />
    <div className="absolute left-[6px] right-[6px] bottom-0 h-[12px] rounded-t-[3px] bg-[#0f7fd0] flex items-center justify-center"><span className="w-[12px] h-[2px] bg-[#0b4f8a]" /></div>
  </div>,
  <svg viewBox="0 0 32 34" className="w-[32px] h-[34px]">
    <path d="M8 2 L24 10 L32 8 V24 L16 34 L2 26 L0 8 Z" fill="#5a78d8" />
    <path d="M16 0 L32 10 V18 L20 10 L10 12 Z" fill="#3cc0ea" />
    <path d="M8 24 L20 28 L32 18 V24 L16 34 Z" fill="#b58ee8" />
    <path d="M16 10 L22 13 V19 L16 24 L10 19 V13 Z" fill="#d8d8d8" />
  </svg>,
  <div className="w-[36px] h-[36px] bg-[#22a9d6] flex items-center justify-center text-white text-[32px] leading-none font-bold font-['Liberation_Sans']">L</div>,
  <div className="relative w-[34px] h-[36px] rounded-full bg-[#7a0bc0] flex items-center justify-center">
    <svg viewBox="0 0 26 14" className="w-[24px] h-[13px]" fill="none" stroke="#fff" strokeWidth="4">
      <circle cx="7" cy="7" r="5" /><circle cx="19" cy="7" r="5" />
    </svg>
    <span className="absolute right-[-3px] bottom-[-2px] w-[15px] h-[17px] rounded-full bg-[#7a5be0] border-[4px] border-[#f5641e] box-border" />
  </div>,
  <svg viewBox="0 0 34 36" className="w-[34px] h-[36px]">
    <circle cx="17" cy="20" r="16" fill="#f8631f" />
    <path d="M22 0 C27 6 33 12 33 20 C30 14 24 12 20 10 Z" fill="#ffc11f" />
    <path d="M2 14 C2 30 26 36 32 20 C28 34 8 34 2 14Z" fill="#e31587" />
    <circle cx="17" cy="21" r="8" fill="#6a4bc0" />
  </svg>,
  <div className="relative w-[36px] h-[36px]">
    <div className="absolute inset-0 rounded-full rounded-bl-[4px] bg-white flex items-center justify-center">
      <div className="w-[28px] h-[28px] rounded-full bg-[#2ec550] flex items-center justify-center">
        <svg viewBox="0 0 24 24" className="w-[18px] h-[18px]" fill="#fff"><path d="M6 3 L9 3 L11 8 L9 10 C10 13 12 15 15 16 L17 14 L21 16 L21 19 C21 21 19 22 17 21 C10 20 5 14 4 7 C3 5 4 3 6 3Z" /></svg>
      </div>
    </div>
    <span className="absolute -top-[9px] -right-[6px] w-[25px] h-[25px] rounded-full bg-[#0b78d0] flex items-center justify-center text-white text-[15px] font-['Open_Sans']">11</span>
  </div>,
  <div className="relative w-[36px] h-[36px]">
    <ChromeLogo />
    <div className="absolute -top-[9px] -right-[6px] w-[24px] h-[24px] rounded-full overflow-hidden bg-linear-to-r from-[#333] via-[#ccc] to-[#888]">
      <svg viewBox="0 0 24 24" className="w-full h-full" fill="#222"><path d="M3 8 C4 2 11 2 11 9 C12 14 16 18 15 24 H4 C5 18 2 14 3 8Z" /></svg>
    </div>
  </div>,
  <div className="relative w-[36px] h-[36px]">
    <ChromeLogo />
    <div className="absolute -top-[9px] -right-[6px] w-[24px] h-[24px] rounded-full bg-[#4d5b69] flex items-center justify-center text-[13px] text-[#d5dbe0] font-['Open_Sans']">A</div>
  </div>,
];

function Taskbar() {
  return (
    <div className="h-[72px] shrink-0 bg-[#d8d8d8] border-t-[2px] border-[#b7b7b7] box-border flex items-center text-[#1c1c1c] font-['Open_Sans']">
      <div className="w-[731px] shrink-0 flex items-center pl-[31px]">
        <svg viewBox="0 0 34 34" className="w-[33px] h-[33px]">
          <defs><linearGradient id="moon" x1="0" y1="0" x2="0" y2="1"><stop offset="0" stopColor="#f9c531" /><stop offset="1" stopColor="#f2811d" /></linearGradient></defs>
          <path d="M26 0 C34 10 34 26 22 32 C12 36 2 30 0 22 C10 26 24 18 26 0Z" fill="url(#moon)" />
        </svg>
        <div className="ml-[12px] flex flex-col">
          <span className="text-[16px] leading-[24px] tracking-[-0.3px]">69°F</span>
          <span className="text-[16px] leading-[24px] text-[#4a4a4a] tracking-[-0.3px]">Clear</span>
        </div>
      </div>
      <div className="w-[36px] h-[35px] shrink-0 grid grid-cols-2 grid-rows-2 gap-[2px]">
        <span className="bg-[#38b5ee]" /><span className="bg-[#2aa6ea]" />
        <span className="bg-[#0a86dc]" /><span className="bg-[#0a7cd6]" />
      </div>
      <div className="ml-[22px] w-[328px] h-[46px] shrink-0 rounded-full bg-[#f2f2f2] border-[2px] border-[#c4c4c4] box-border flex items-center pl-[14px] pr-[2px]">
        <Search className="w-[26px] h-[26px] text-[#1c1c1c]" strokeWidth={2} />
        <span className="ml-[12px] text-[18px] text-[#555] tracking-[-0.2px]">Search</span>
        <div className="ml-auto"><Balloons /></div>
      </div>
      <div className="ml-[3px] flex items-center">
        {DOCK.map((icon, i) => (
          <div key={i} className={i === 9 ? "relative w-[56px] h-[57px] mx-[5px] rounded-[6px] bg-[#ececec] flex items-center justify-center" : "relative w-[66px] h-[57px] flex items-center justify-center"}>
            {icon}
            {(i === 3 || i === 10) && <span className="absolute bottom-[0px] w-[9px] h-[5px] rounded-full bg-[#707070]" />}
            {i === 9 && <span className="absolute bottom-[0px] w-[24px] h-[5px] rounded-full bg-[#0a78d4]" />}
          </div>
        ))}
      </div>
      <div className="flex-1 flex items-center justify-end pr-[30px] text-[#1c1c1c]">
        <ChevronUp className="w-[24px] h-[24px] mr-[23px]" strokeWidth={1.800} />
        <svg viewBox="0 0 26 18" className="w-[26px] h-[18px] mr-[22px]" fill="none" stroke="#2b2b2b" strokeWidth="1.400">
          <path d="M6 17 H21 A4 4 0 0 0 22 9 A6 6 0 0 0 12 5 A5 5 0 0 0 5 9 A4 4 0 0 0 6 17Z" fill="#a8a8a8" />
        </svg>
        <Wifi className="w-[24px] h-[24px] mr-[11px] text-[#2b2b2b]" strokeWidth={1.600} />
        <Volume2 className="w-[26px] h-[26px] mr-[10px] text-[#2b2b2b]" strokeWidth={1.400} />
        <svg viewBox="0 0 26 22" className="w-[25px] h-[22px] mr-[25px]" fill="none" stroke="#2b2b2b" strokeWidth="1.500">
          <rect x="1" y="6" width="21" height="14" rx="2.500" />
          <rect x="23" y="10" width="2.500" height="6" fill="#2b2b2b" stroke="none" />
          <path d="M3 18 V8 H11 L7 18 Z" fill="#2b2b2b" stroke="none" />
          <path d="M7 0 L4 7 H8 L5 13" strokeWidth="1.800" />
        </svg>
        <div className="flex flex-col items-end text-[17.500px] leading-[24px] text-[#1c1c1c]">
          <span>12:20 AM</span>
          <span>10/8/2023</span>
        </div>
        <Bell className="w-[23px] h-[25px] ml-[13px]" strokeWidth={1.400} />
      </div>
    </div>
  );
}

export default function App() {
  return (
    <div className="w-[2560px] h-[1600px] overflow-hidden flex flex-col font-['Lato',sans-serif] bg-white">
      <TabStrip />
      <Toolbar />
      <div className="flex-1 min-h-0 flex">
        <div className="relative flex-1 min-w-0 flex flex-col bg-[#cdcdcd]">
          <Header />
          <div className="relative flex-1 min-h-0">
            <Doodle />
            <Checkout />
          </div>
        </div>
        <Scrollbar />
      </div>
      <Taskbar />
    </div>
  );
}
